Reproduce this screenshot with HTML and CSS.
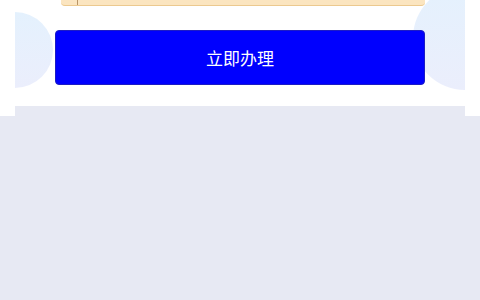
FILE: index.html
```html
<!DOCTYPE html>
<html lang="zh-CN">
<head>
  <meta charset="UTF-8">
  <meta name="viewport" content="width=device-width, initial-scale=1.0">
  <title>立即办理</title>
  <link rel="stylesheet" href="styles.css">
</head>
<body>
  <div class="top-band">
    <div class="card">
      <span class="blob blob-left"></span>
      <span class="blob blob-right"></span>
      <div class="input-strip">
        <span class="caret"></span>
      </div>
      <div class="action">
        <button type="button" class="btn-apply">立即办理</button>
      </div>
    </div>
    <div class="card-gap"></div>
  </div>
</body>
</html>
```

FILE: styles.css
```css
html, body {
  margin: 0;
  padding: 0;
  height: 100%;
  font-family: "Noto Sans CJK SC", "Noto Sans", sans-serif;
  background-color: #e7e9f3;
}
.top-band {
  background-color: #fff;
  padding: 0 15px;
}
.card {
  position: relative;
  height: 106px;
  background-color: #fff;
  overflow: hidden;
}
.card-gap {
  height: 10px;
  background-color: #e7e9f3;
}
.blob {
  position: absolute;
  border-radius: 50%;
  background: linear-gradient(180deg, #e4f1fd 0%, #ebeefc 100%);
}
.blob-left {
  left: -38px;
  top: 12px;
  width: 76px;
  height: 76px;
}
.blob-right {
  right: -52px;
  top: -14px;
  width: 104px;
  height: 104px;
}
.input-strip {
  position: relative;
  margin: 0 40px 0 46px;
  height: 5px;
  background-color: #fbe5c0;
  border-bottom: 1px solid #ecc98f;
  border-radius: 0 0 4px 4px;
}
.caret {
  position: absolute;
  left: 16px;
  top: 0;
  width: 1px;
  height: 5px;
  background-color: #b99566;
}
.action {
  position: relative;
  padding: 24px 40px 0 40px;
}
.btn-apply {
  display: block;
  width: 100%;
  height: 55px;
  padding: 0;
  font-family: inherit;
  font-size: 17px;
  color: #fff;
  background-color: #0000fe;
  border: 1px solid #1c1cc4;
  border-radius: 4px;
  cursor: pointer;
}
```
